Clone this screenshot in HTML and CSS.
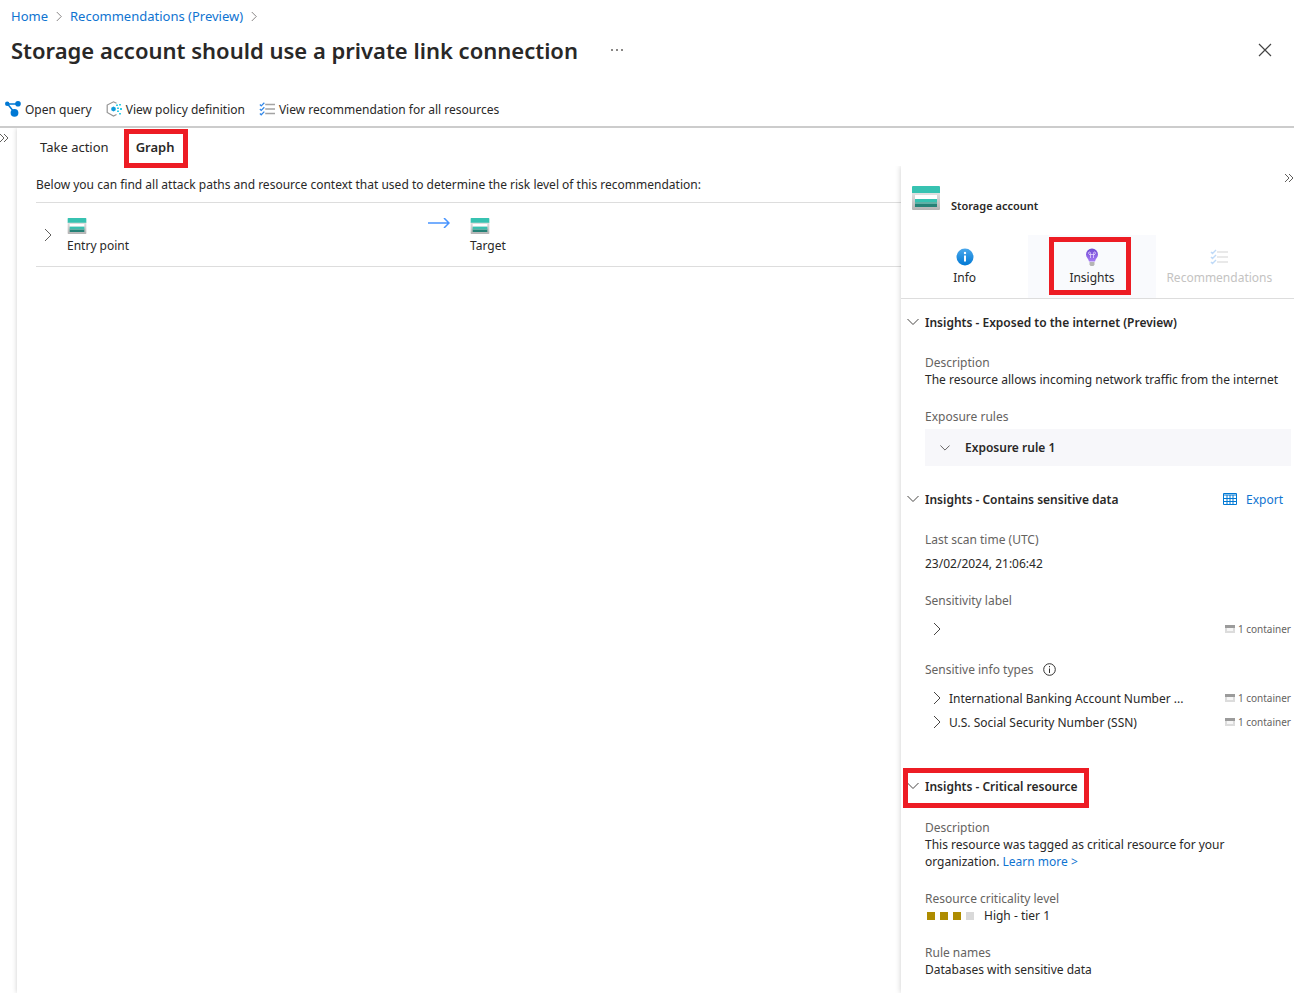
FILE: index.html
```
<!DOCTYPE html>
<html lang="en">
<head>
  <meta charset="UTF-8">
  <meta name="viewport" content="width=device-width, initial-scale=1.0">
  <title>Storage account should use a private link connection</title>
  <link rel="stylesheet" href="styles.css">
</head>
<body>
  <!-- shared icons -->
  <svg width="0" height="0" class="sprite">
    <defs>
      <linearGradient id="grey" x1="0" y1="0" x2="0" y2="1">
        <stop offset="0" stop-color="#e4e4e4"/>
        <stop offset="1" stop-color="#b3b3b3"/>
      </linearGradient>
      <linearGradient id="blue" x1="0" y1="0" x2="0" y2="1">
        <stop offset="0" stop-color="#4aa8ec"/>
        <stop offset="1" stop-color="#0078d4"/>
      </linearGradient>
      <linearGradient id="purple" x1="0" y1="0" x2="0" y2="1">
        <stop offset="0" stop-color="#6f4bd2"/>
        <stop offset="1" stop-color="#a67af4"/>
      </linearGradient>
    </defs>
    <symbol id="storage" viewBox="0 0 28 24">
      <path d="M0 6h28v17a1 1 0 0 1-1 1H1a1 1 0 0 1-1-1z" fill="url(#grey)"/>
      <path d="M1 0h26a1 1 0 0 1 1 1v6H0V1a1 1 0 0 1 1-1z" fill="#37c2b1"/>
      <path d="M3 9h22v4H3z" fill="#fff"/>
      <path d="M3 13h22v5H3z" fill="#37c2b1"/>
      <path d="M3 16h22v2H3z" fill="#5fb0a6"/>
      <path d="M3 18h22v3H3z" fill="#258277"/>
    </symbol>
    <symbol id="right" viewBox="0 0 8 14">
      <path d="M1 1l6 6-6 6" fill="none" stroke="currentColor"/>
    </symbol>
    <symbol id="down" viewBox="0 0 12 8">
      <path d="M.5 1L6 6.500 11.500 1" fill="none" stroke="currentColor"/>
    </symbol>
    <symbol id="double" viewBox="0 0 10 8">
      <path d="M1 0l4 4-4 4M5 0l4 4-4 4" fill="none" stroke="currentColor"/>
    </symbol>
    <symbol id="checklist" viewBox="0 0 18 16">
      <path d="M1 3l1.500 1.500L6 1M1 8l1.500 1.500L6 6M1 13l1.500 1.500L6 11" fill="none" stroke="#2f86e8" stroke-width="1.400"/>
      <path d="M7 3h11M7 8h11M7 13h11" stroke="#a3a3a3" stroke-width="1.600"/>
    </symbol>
    <symbol id="container" viewBox="0 0 10 8">
      <path d="M0 0h10v3H0z" fill="#9b9b9b"/>
      <path d="M1 3v4h8V3" fill="#f6f6f6" stroke="#dcdcdc" stroke-width="2"/>
    </symbol>
  </svg>

  <header>
    <nav class="breadcrumb">
      <a href="#">Home</a>
      <svg class="crumb-arrow"><use href="#right"/></svg>
      <a href="#">Recommendations (Preview)</a>
      <svg class="crumb-arrow"><use href="#right"/></svg>
    </nav>
    <div class="title-bar">
      <h1>Storage account should use a private link connection</h1>
      <button class="more" aria-label="More">
        <svg width="12" height="2" viewBox="0 0 12 2"><path d="M0 0h2v2H0zM5 0h2v2H5zM10 0h2v2h-2z" fill="#8a8886"/></svg>
      </button>
      <button class="close" aria-label="Close">
        <svg width="14" height="14" viewBox="0 0 14 14"><path d="M1 1l12 12M13 1L1 13" stroke="#444" stroke-width="1.200"/></svg>
      </button>
    </div>
  </header>

  <div class="toolbar">
    <button>
      <svg width="16" height="16" viewBox="0 0 16 16">
        <path d="M2 3h11M3 3.500L9 11" fill="none" stroke="#0078d4" stroke-width="1.500"/>
        <circle cx="2.200" cy="2.800" r="2.200" fill="#0078d4"/>
        <circle cx="13" cy="2.800" r="2.800" fill="#0078d4"/>
        <circle cx="9.500" cy="11.800" r="3.900" fill="#0078d4"/>
      </svg>
      Open query
    </button>
    <button>
      <svg width="16" height="16" viewBox="0 0 16 16">
        <path d="M10.500 2.200L7.500 .8 1.200 4v7.500L7.500 15l3-1.500" fill="none" stroke="#949494" stroke-width="1.200"/>
        <path d="M7.500 5.500L9.700 6.700v2.600L7.500 10.500 5.300 9.300V6.700z" fill="#0d9bdc"/>
        <path d="M10 3.500h2V5h-2zM13 3h2v1.500h-2zM11 6.500h2V8h-2zM14 7h2v2h-2zM11 9.500h2V11h-2zM13 12h2v1.500h-2z" fill="#32cfe8"/>
      </svg>
      View policy definition
    </button>
    <button>
      <svg width="16" height="16"><use href="#checklist"/></svg>
      View recommendation for all resources
    </button>
  </div>

  <div class="workspace">
    <aside class="rail">
      <button aria-label="Expand menu"><svg width="10" height="8"><use href="#double"/></svg></button>
    </aside>
    <main>
      <nav class="tabs">
        <button>Take action</button>
        <button class="active marked">Graph</button>
      </nav>
      <div class="content">
        <section class="paths">
          <p>Below you can find all attack paths and resource context that used to determine the risk level of this recommendation:</p>
          <div class="path-row">
            <button aria-label="Expand path"><svg width="8" height="14"><use href="#right"/></svg></button>
            <div class="node entry">
              <svg width="20" height="16"><use href="#storage"/></svg>
              <span>Entry point</span>
            </div>
            <svg class="arrow" width="22" height="10" viewBox="0 0 22 10">
              <path d="M0 5h21M16 0l5 5-5 5" fill="none" stroke="#4894fe" stroke-width="1.500"/>
            </svg>
            <div class="node">
              <svg width="20" height="16"><use href="#storage"/></svg>
              <span>Target</span>
            </div>
          </div>
        </section>

        <aside class="panel">
          <div class="panel-head">
            <svg width="28" height="24"><use href="#storage"/></svg>
            <h2>Storage account</h2>
            <button aria-label="Collapse panel"><svg width="10" height="8"><use href="#double"/></svg></button>
          </div>
          <div class="panel-tabs">
            <button>
              <svg width="18" height="18" viewBox="0 0 18 18">
                <circle cx="9" cy="9" r="8.500" fill="url(#blue)"/>
                <circle cx="9" cy="5" r="1.200" fill="#fff"/>
                <path d="M8 7.500h2v6H8z" fill="#fff"/>
              </svg>
              Info
            </button>
            <button class="active marked">
              <svg width="18" height="18" viewBox="0 0 18 18">
                <path d="M9 .5a6 6 0 0 1 6 6c0 3-2.500 4-3 7H6c-.5-3-3-4-3-7a6 6 0 0 1 6-6z" fill="url(#purple)"/>
                <path d="M7.500 10V6.500M10.500 10V6.500M6 6.500h6M7.500 6.500C5 6.500 5 4 6.500 4c1 0 1 1 1 2.500M10.500 6.500C13 6.500 13 4 11.500 4c-1 0-1 1-1 2.500" fill="none" stroke="#e3d4fd" stroke-width=".8"/>
                <path d="M6.500 14h5v2.500L10.500 18h-3l-1-1.500z" fill="#b5b5b5"/>
              </svg>
              Insights
            </button>
            <button disabled>
              <svg width="18" height="18"><use href="#checklist"/></svg>
              Recommendations
            </button>
          </div>

          <section class="insight">
            <h3><button><svg width="12" height="8"><use href="#down"/></svg>Insights - Exposed to the internet (Preview)</button></h3>
            <dl>
              <dt>Description</dt>
              <dd>The resource allows incoming network traffic from the internet</dd>
              <dt>Exposure rules</dt>
              <dd class="rule">
                <button><svg width="10" height="8" viewBox="0 0 12 8"><use href="#down"/></svg>Exposure rule 1</button>
              </dd>
            </dl>
          </section>

          <section class="insight sensitive">
            <h3>
              <button><svg width="12" height="8"><use href="#down"/></svg>Insights - Contains sensitive data</button>
              <a href="#" class="export">
                <svg width="14" height="12" viewBox="0 0 14 12">
                  <path d="M.5.5h13v11H.5zM.5 2h13M.5 5.500h13M.5 8.500h13M4 2v9.500M7 2v9.500M10 2v9.500" fill="none" stroke="#0078d4"/>
                </svg>
                Export
              </a>
            </h3>
            <dl>
              <dt>Last scan time (UTC)</dt>
              <dd class="scan-time">23/02/2024, 21:06:42</dd>
              <dt>Sensitivity label</dt>
              <dd class="items">
                <div class="item">
                  <button aria-label="Expand label"><svg width="8" height="14"><use href="#right"/></svg></button>
                  <small><svg width="10" height="8"><use href="#container"/></svg>1 container</small>
                </div>
              </dd>
              <dt>
                Sensitive info types
                <svg class="info" width="13" height="13" viewBox="0 0 13 13">
                  <circle cx="6.500" cy="6.500" r="5.800" fill="none" stroke="#323130"/>
                  <path d="M6 3h1v1.200H6zM6 5.500h1V10H6z" fill="#323130"/>
                </svg>
              </dt>
              <dd class="items">
                <div class="item">
                  <button><svg width="8" height="14"><use href="#right"/></svg>International Banking Account Number ...</button>
                  <small><svg width="10" height="8"><use href="#container"/></svg>1 container</small>
                </div>
                <div class="item">
                  <button><svg width="8" height="14"><use href="#right"/></svg>U.S. Social Security Number (SSN)</button>
                  <small><svg width="10" height="8"><use href="#container"/></svg>1 container</small>
                </div>
              </dd>
            </dl>
          </section>

          <section class="insight critical">
            <h3><button class="marked"><svg width="12" height="8"><use href="#down"/></svg>Insights - Critical resource</button></h3>
            <dl>
              <dt>Description</dt>
              <dd class="tagged">This resource was tagged as critical resource for your organization. <a href="#">Learn more &gt;</a></dd>
              <dt>Resource criticality level</dt>
              <dd class="level"><i></i><i></i><i></i><i class="off"></i><span>High - tier 1</span></dd>
              <dt>Rule names</dt>
              <dd>Databases with sensitive data</dd>
            </dl>
          </section>
        </aside>
      </div>
    </main>
  </div>
</body>
</html>
```
FILE: styles.css
```
* {
  box-sizing: border-box;
}
body {
  margin: 0;
  min-height: 100vh;
  display: flex;
  flex-direction: column;
  font-family: "Noto Sans", "Open Sans", sans-serif;
  font-size: 12px;
  line-height: 17px;
  color: #292827;
  background: #fff;
}
h1, h2, h3, p, dl, dd {
  margin: 0;
}
button {
  display: flex;
  align-items: center;
  padding: 0;
  border: none;
  background: none;
  font: inherit;
  color: inherit;
  cursor: pointer;
}
a {
  color: #0f74d1;
  text-decoration: none;
}
a:hover {
  text-decoration: underline;
}
svg {
  flex: none;
}
.sprite {
  position: absolute;
}

/* header */
.breadcrumb {
  display: flex;
  align-items: center;
  gap: 8px;
  height: 32px;
  padding-left: 11px;
  font-size: 13px;
}
.crumb-arrow {
  width: 6px;
  height: 11px;
  color: #605e5c;
}
.title-bar {
  display: flex;
  align-items: center;
  height: 36px;
  padding: 0 22px 0 11px;
}
h1 {
  font-size: 22px;
  line-height: 32px;
  font-weight: 600;
}
.more {
  margin-left: 33px;
}
.close {
  margin-left: auto;
}

/* toolbar */
.toolbar {
  display: flex;
  gap: 14px;
  height: 60px;
  padding: 24px 5px 0;
  border-bottom: 2px solid #cccccc;
}
.toolbar button {
  height: 34px;
  gap: 4px;
}

/* workspace */
.workspace {
  flex: 1;
  display: flex;
}
.rail {
  flex: 0 0 17px;
}
.rail button {
  height: 20px;
  margin-left: -1px;
  color: #605e5c;
}
main {
  flex: 1;
  display: flex;
  flex-direction: column;
  min-width: 0;
  box-shadow: 0 0 5px rgba(0, 0, 0, 0.2);
  clip-path: inset(0 0 0 -6px);
}
.tabs {
  display: flex;
  height: 38px;
  padding-left: 11px;
}
.tabs button {
  padding: 0 12px;
  font-size: 13px;
}
.tabs .active {
  margin-left: 3px;
  font-weight: 600;
}
.marked {
  position: relative;
}
/* red highlight frame */
.marked::after {
  content: '';
  position: absolute;
  border: 5px solid #ed1c24;
}
.tabs .marked::after {
  inset: 1px -2px -2px 0;
}
.content {
  flex: 1;
  display: flex;
}

/* attack paths */
.paths {
  flex: 1;
  min-width: 0;
  padding: 10px 0 0 19px;
}
.path-row {
  display: flex;
  margin-top: 9px;
  padding: 15px 0 12px 8px;
  border-top: 1px solid #dddddd;
  border-bottom: 1px solid #dddddd;
}
.path-row button {
  width: 23px;
  height: 34px;
  color: #605e5c;
}
.node {
  display: flex;
  flex-direction: column;
  gap: 3px;
}
.entry {
  width: 361px;
}
.arrow {
  margin-right: 20px;
}

/* side panel */
.panel {
  flex: 0 0 393px;
  box-shadow: 0 0 6px rgba(0, 0, 0, 0.2);
  clip-path: inset(0 0 0 -6px);
}
.panel-head {
  display: flex;
  height: 69px;
  padding: 20px 0 0 11px;
}
.panel-head h2 {
  margin: 11px 0 0 11px;
  font-size: 11px;
  line-height: 17px;
  font-weight: 600;
}
.panel-head button {
  align-self: flex-start;
  height: 8px;
  margin: -12px 0 0 auto;
  color: #605e5c;
}
.panel-tabs {
  display: grid;
  grid-template-columns: repeat(3, 1fr);
  height: 64px;
  padding-right: 11px;
  border-bottom: 1px solid #dddddd;
}
.panel-tabs button {
  flex-direction: column;
  padding-top: 13px;
  gap: 3px;
}
.panel-tabs .active {
  background: #f9fafd;
}
.panel-tabs .marked::after {
  inset: 2px 25px 3px 21px;
}
.panel-tabs button:disabled {
  color: #c4c3c2;
}
.panel-tabs button:disabled svg {
  opacity: 0.3;
}

/* insights */
.insight {
  padding: 13px 3px 0 6px;
}
.insight h3 {
  display: flex;
  justify-content: space-between;
  align-items: center;
  height: 20px;
  font-size: 12px;
  font-weight: 600;
}
.insight h3 button {
  gap: 6px;
}
.insight dl {
  padding: 22px 0 0 18px;
}
.insight svg {
  color: #484644;
}
dt {
  display: flex;
  align-items: center;
  color: #65635f;
}
dd + dt {
  margin-top: 20px;
}
.rule {
  margin-top: 4px;
  padding: 10px 15px;
  background: #f7f7fa;
  font-weight: 600;
}
.rule button {
  gap: 15px;
}
.insight.sensitive {
  padding-top: 23px;
}
.insight.critical {
  padding-top: 42px;
}
.insight.critical dl {
  padding-top: 23px;
}
.critical .marked::after {
  inset: -10px -11px -13px -4px;
}
.export {
  display: flex;
  align-items: center;
  gap: 9px;
  margin-right: 8px;
  font-weight: 400;
}
.scan-time {
  margin-top: 7px;
}
.items {
  margin-top: 8px;
}
.item {
  display: flex;
  align-items: center;
  justify-content: space-between;
  height: 24px;
  padding-left: 8px;
}
.item button {
  gap: 8px;
}
.item small {
  display: flex;
  align-items: center;
  gap: 3px;
  font-size: 10px;
  color: #65635f;
}
.info {
  margin-left: 10px;
}
.tagged {
  max-width: 320px;
}
.level {
  display: flex;
  align-items: center;
  gap: 5px;
  padding-left: 2px;
}
.level i {
  width: 8px;
  height: 8px;
  background: #ae8c00;
}
.level .off {
  background: #d9d9d9;
}
.level span {
  margin-left: 5px;
}
```
